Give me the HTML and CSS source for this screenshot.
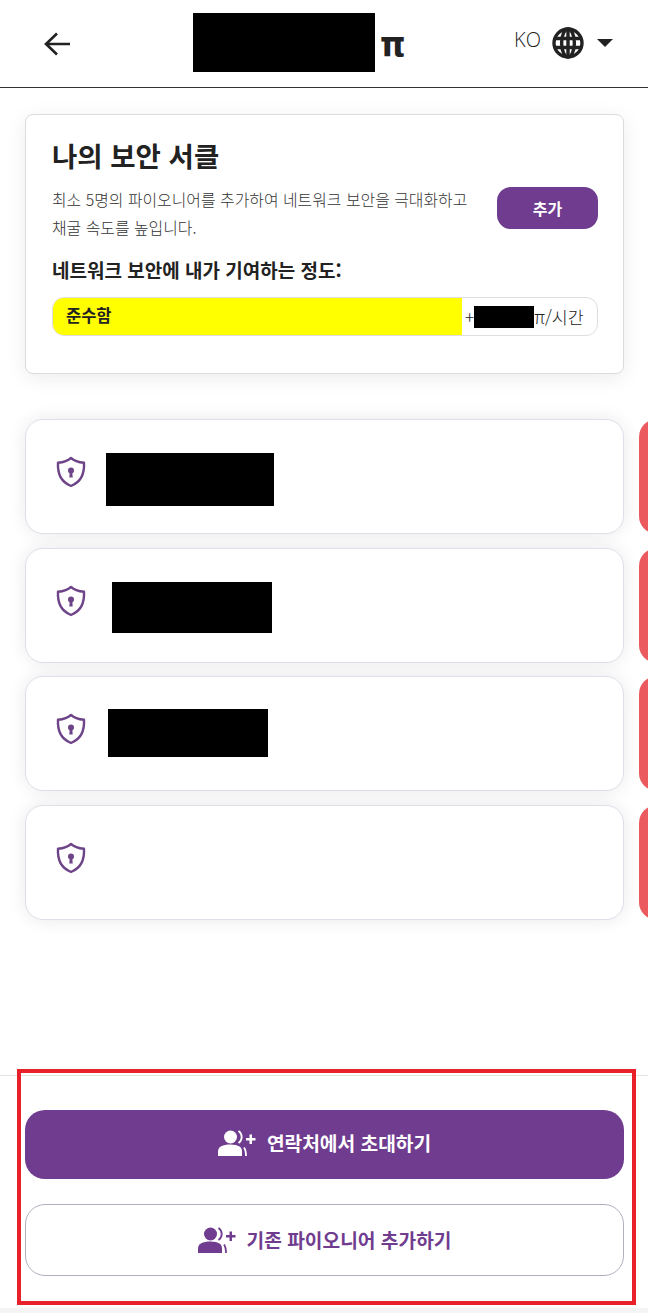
FILE: index.html
```html
<!DOCTYPE html>
<html lang="ko">
<head>
  <meta charset="UTF-8" />
  <title>나의 보안 서클</title>
  <link rel="stylesheet" href="styles.css">
</head>
<body>
  <header class="top-bar">
    <svg class="back-icon" viewBox="0 0 26 24" fill="none" stroke="#222" stroke-width="2.6">
      <path d="M13 1.5 2 12l11 10.500M2 12h24" />
    </svg>
    <div class="logo-mask"></div>
    <span class="pi-mark">π</span>
    <div class="lang-menu">
      <span class="lang-code">KO</span>
      <svg class="globe-icon" viewBox="0 0 32 32" fill="none" stroke="#222" stroke-width="3.4">
        <circle cx="16" cy="16" r="14" />
        <ellipse cx="16" cy="16" rx="6.400" ry="14" />
        <path d="M16 2v28M3.200 11.500h25.600M3.200 20.500h25.600" />
      </svg>
      <span class="caret"></span>
    </div>
  </header>

  <main class="content">
    <section class="circle-card">
      <h1 class="card-title">나의 보안 서클</h1>
      <div class="card-intro">
        <p class="card-desc">최소 5명의 파이오니어를 추가하여 네트워크 보안을 극대화하고 채굴 속도를 높입니다.</p>
        <button class="add-btn">추가</button>
      </div>
      <h2 class="card-subtitle">네트워크 보안에 내가 기여하는 정도:</h2>
      <div class="rate-bar">
        <div class="rate-fill">준수함</div>
        <div class="rate-value">+<span class="rate-mask"></span>π/시간</div>
      </div>
    </section>

    <ul class="member-list">
      <li class="member">
        <div class="member-card">
          <svg class="shield-icon" viewBox="0 0 32 32"><path class="shield-line" d="M16 2c3 2.700 7.500 4.200 13 4.800.6 10.800-3.500 19.500-13 23.200C6.500 26.300 2.400 17.600 3 6.800 8.500 6.200 13 4.700 16 2z" /><circle class="shield-key" cx="16" cy="14.500" r="3" /><path class="shield-key" d="M14.800 15h2.400l.5 6.500h-3.400z" /></svg>
          <div class="name-mask name-mask-a"></div>
        </div>
        <div class="member-remove"></div>
      </li>
      <li class="member">
        <div class="member-card">
          <svg class="shield-icon" viewBox="0 0 32 32"><path class="shield-line" d="M16 2c3 2.700 7.500 4.200 13 4.800.6 10.800-3.500 19.500-13 23.200C6.500 26.300 2.400 17.600 3 6.800 8.500 6.200 13 4.700 16 2z" /><circle class="shield-key" cx="16" cy="14.500" r="3" /><path class="shield-key" d="M14.800 15h2.400l.5 6.500h-3.400z" /></svg>
          <div class="name-mask name-mask-b"></div>
        </div>
        <div class="member-remove"></div>
      </li>
      <li class="member">
        <div class="member-card">
          <svg class="shield-icon" viewBox="0 0 32 32"><path class="shield-line" d="M16 2c3 2.700 7.500 4.200 13 4.800.6 10.800-3.500 19.500-13 23.200C6.500 26.300 2.400 17.600 3 6.800 8.500 6.200 13 4.700 16 2z" /><circle class="shield-key" cx="16" cy="14.500" r="3" /><path class="shield-key" d="M14.800 15h2.400l.5 6.500h-3.400z" /></svg>
          <div class="name-mask name-mask-c"></div>
        </div>
        <div class="member-remove"></div>
      </li>
      <li class="member">
        <div class="member-card">
          <svg class="shield-icon" viewBox="0 0 32 32"><path class="shield-line" d="M16 2c3 2.700 7.500 4.200 13 4.800.6 10.800-3.500 19.500-13 23.200C6.500 26.300 2.400 17.600 3 6.800 8.500 6.200 13 4.700 16 2z" /><circle class="shield-key" cx="16" cy="14.500" r="3" /><path class="shield-key" d="M14.800 15h2.400l.5 6.500h-3.400z" /></svg>
        </div>
        <div class="member-remove"></div>
      </li>
    </ul>
  </main>

  <footer class="action-bar">
    <div class="highlight-box"></div>
    <button class="action-btn action-primary">
      <svg class="person-icon" viewBox="0 0 38 26"><circle cx="12.500" cy="7" r="6.500" /><path d="M0 26v-4.500C0 17 4.500 14.500 12.500 14.500c4 0 7 .8 9 2 1.800 1.200 2.500 3 2.500 5V26z" /><path class="person-arc" d="M20.500 1c2.200 1.500 3.200 3.500 3.200 6s-1 4.500-3.200 6M26 17.500c1.500 2 2 4.500 2 8.500" /><path d="M31.500 4.500H34V8h3.500v2.500H34V14h-2.500v-3.500H28V8h3.500z" /></svg>
      연락처에서 초대하기
    </button>
    <button class="action-btn action-outline">
      <svg class="person-icon" viewBox="0 0 38 26"><circle cx="12.500" cy="7" r="6.500" /><path d="M0 26v-4.500C0 17 4.500 14.500 12.500 14.500c4 0 7 .8 9 2 1.800 1.200 2.500 3 2.500 5V26z" /><path class="person-arc" d="M20.500 1c2.200 1.500 3.200 3.500 3.200 6s-1 4.500-3.200 6M26 17.500c1.500 2 2 4.500 2 8.500" /><path d="M31.500 4.500H34V8h3.500v2.500H34V14h-2.500v-3.500H28V8h3.500z" /></svg>
      기존 파이오니어 추가하기
    </button>
  </footer>
  <div class="bottom-strip"></div>
</body>
</html>
```

FILE: styles.css
```css
/* ===== page ===== */
* {
  box-sizing: border-box;
}

html,
body {
  height: 100%;
}

body {
  margin: 0;
  display: flex;
  flex-direction: column;
  overflow: hidden;
  background-color: #fff;
  color: #222;
  font-family: "Noto Sans CJK KR", "Noto Sans", sans-serif;
}

/* ===== top bar ===== */
.top-bar {
  height: 88px;
  flex-shrink: 0;
  display: flex;
  align-items: center;
  padding: 0 35px 2px 44px;
  border-bottom: 1px solid #333;
}

.back-icon {
  width: 26px;
  height: 24px;
  margin-top: 2px;
}

.logo-mask {
  width: 182px;
  height: 59px;
  margin-left: 123px;
  background-color: #000;
}

.pi-mark {
  margin: 4px 0 0 5px;
  font-family: "DejaVu Sans Condensed", "DejaVu Sans", sans-serif;
  font-size: 36px;
  font-weight: bold;
  line-height: 1;
}

.lang-menu {
  margin-left: auto;
  display: flex;
  align-items: center;
}

.lang-code {
  margin-bottom: 6px;
  color: #222;
  font-family: "Open Sans", sans-serif;
  font-size: 20px;
  font-weight: 300;
}

.globe-icon {
  width: 32px;
  height: 32px;
  margin-left: 11px;
}

.caret {
  width: 0;
  height: 0;
  margin-left: 13px;
  border-left: 8px solid transparent;
  border-right: 8px solid transparent;
  border-top: 8px solid #222;
}

/* ===== main content ===== */
.content {
  flex: 1;
  overflow: hidden;
  padding-top: 26px;
}

.circle-card {
  width: 599px;
  height: 260px;
  margin-left: 25px;
  padding: 22px 25px 0 26px;
  border: 1px solid #dcdcdc;
  border-radius: 8px;
  background-color: #fff;
  box-shadow: 0 4px 20px rgba(0, 0, 0, 0.08);
}

.card-title {
  margin: 0;
  font-size: 27.500px;
  font-weight: 700;
  line-height: 36px;
}

.card-intro {
  display: flex;
  justify-content: space-between;
  align-items: flex-start;
  margin-top: 13px;
}

.card-desc {
  width: 425px;
  margin: 0;
  font-size: 15.900px;
  font-weight: 300;
  line-height: 28px;
  color: #333;
}

.add-btn {
  width: 101px;
  height: 42px;
  margin-top: 1px;
  border: none;
  border-radius: 14px;
  background-color: #703c8f;
  color: #fff;
  font-family: inherit;
  font-size: 16px;
  font-weight: 700;
}

.card-subtitle {
  margin: 14px 0 0;
  font-size: 19px;
  font-weight: 700;
  line-height: 28px;
}

.rate-bar {
  display: flex;
  height: 39px;
  margin-top: 13px;
  border: 1px solid #dedede;
  border-radius: 12px;
  overflow: hidden;
}

.rate-fill {
  width: 410px;
  margin: -1px 0 -1px -1px;
  padding-left: 14px;
  background-color: #ff0;
  font-size: 16.500px;
  font-weight: 700;
  line-height: 37px;
}

.rate-value {
  flex: 1;
  display: flex;
  align-items: center;
  padding-left: 3px;
  font-size: 17.300px;
  font-weight: 300;
}

.rate-mask {
  width: 60px;
  height: 22px;
  background-color: #000;
}

/* ===== member list ===== */
.member-list {
  list-style: none;
  margin: 45px 0 0;
  padding: 0;
  display: flex;
  flex-direction: column;
  gap: 13.670px;
}

.member {
  display: flex;
  height: 115px;
  margin-left: 25px;
}

.member-card {
  width: 599px;
  flex-shrink: 0;
  display: flex;
  align-items: flex-start;
  padding: 36px 0 0 29px;
  border: 1px solid #e2dde8;
  border-radius: 18px;
  background-color: #fff;
  box-shadow: 0 0 18px rgba(0, 0, 0, 0.09);
}

.shield-icon {
  width: 32px;
  height: 32px;
  flex-shrink: 0;
}

.shield-line {
  fill: none;
  stroke: #6d4488;
  stroke-width: 2.400;
  stroke-linejoin: round;
}

.shield-key {
  fill: #6d4488;
}

.name-mask {
  background-color: #000;
}

.name-mask-a {
  width: 168px;
  height: 53px;
  margin: -3px 0 0 19px;
}

.name-mask-b {
  width: 160px;
  height: 51px;
  margin: -3px 0 0 25px;
}

.name-mask-c {
  width: 160px;
  height: 48px;
  margin: -4px 0 0 21px;
}

.member-remove {
  width: 40px;
  flex-shrink: 0;
  margin-left: 15px;
  border-radius: 18px 0 0 18px;
  background-color: #ea5a5f;
}

/* ===== bottom actions ===== */
.action-bar {
  position: relative;
  flex-shrink: 0;
  display: flex;
  flex-direction: column;
  height: 233px;
  padding: 34px 24px 0 25px;
  border-top: 1px solid #e4e4e4;
}

.highlight-box {
  position: absolute;
  top: -7px;
  left: 17px;
  width: 619px;
  height: 236px;
  border: 4px solid #e8202a;
  pointer-events: none;
}

.action-btn {
  display: flex;
  align-items: center;
  justify-content: center;
  gap: 11px;
  padding: 0;
  font-family: inherit;
  font-size: 19.200px;
  font-weight: 700;
}

.action-primary {
  height: 69px;
  padding-bottom: 3px;
  border: none;
  border-radius: 20px;
  background-color: #703c8f;
  color: #fff;
}

.action-outline {
  height: 72px;
  margin-top: 25px;
  border: 1px solid #b5afc0;
  border-radius: 20px;
  background-color: #fff;
  color: #703c8f;
}

.person-icon {
  width: 38px;
  height: 26px;
  fill: currentColor;
}

.person-arc {
  fill: none;
  stroke: currentColor;
  stroke-width: 1.800;
}

.bottom-strip {
  height: 5px;
  flex-shrink: 0;
  background-color: #f4f4f4;
}
```
